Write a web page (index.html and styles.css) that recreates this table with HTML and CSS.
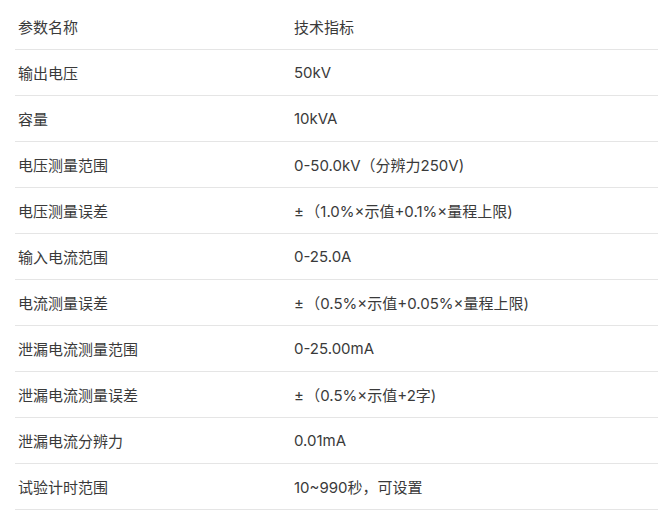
FILE: index.html
```html
<!DOCTYPE html>
<html lang="zh">
<head>
<meta charset="utf-8">
<link rel="stylesheet" href="styles.css">
</head>
<body>
<table class="spec">
<tr><td class="name">参数名称</td><td>技术指标</td></tr>
<tr><td class="name">输出电压</td><td>50kV</td></tr>
<tr><td class="name">容量</td><td>10kVA</td></tr>
<tr><td class="name">电压测量范围</td><td>0-50.0kV（分辨力250V)</td></tr>
<tr><td class="name">电压测量误差</td><td>±&#8202;（1.0%×示值+0.1%×量程上限)</td></tr>
<tr><td class="name">输入电流范围</td><td>0-25.0A</td></tr>
<tr><td class="name">电流测量误差</td><td>±&#8202;（0.5%×示值+0.05%×量程上限)</td></tr>
<tr><td class="name">泄漏电流测量范围</td><td>0-25.00mA</td></tr>
<tr><td class="name">泄漏电流测量误差</td><td>±&#8202;（0.5%×示值+2字)</td></tr>
<tr><td class="name">泄漏电流分辨力</td><td>0.01mA</td></tr>
<tr><td class="name">试验计时范围</td><td>10~990秒，可设置</td></tr>
</table>
</body>
</html>
```
FILE: styles.css
```css
html, body {
  margin: 0;
  padding: 0;
  background: #fff;
}
body {
  padding: 4px 0 0 15px;
  font-family: Inter, "Noto Sans CJK SC", sans-serif;
  font-size: 15px;
  color: #3a3a3a;
}
.spec {
  border-collapse: collapse;
  table-layout: fixed;
  width: 643px;
}
.spec td {
  height: 45px;
  padding: 0 3px;
  border-bottom: 1px solid #e5e5e5;
  vertical-align: middle;
  white-space: nowrap;
}
.spec td.name {
  width: 270px;
}
```
